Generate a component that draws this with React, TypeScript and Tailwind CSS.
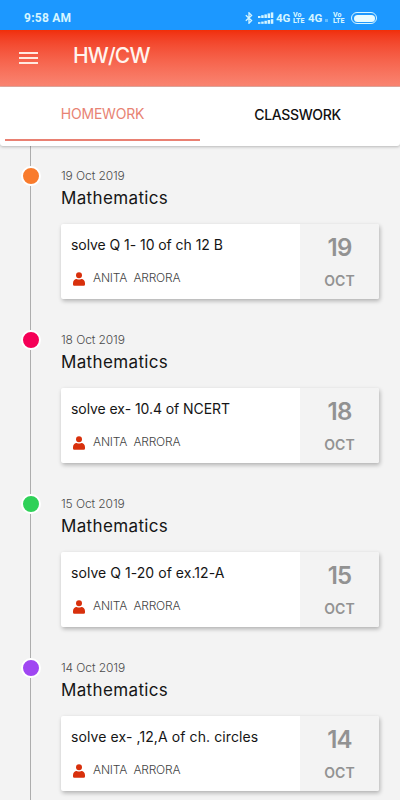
import React from "react";

type Entry = {
  day: string;
  task: string;
  taskClass: string;
  dot: string;
};

const entries: Entry[] = [
  { day: "19", task: "solve Q 1- 10 of ch 12 B", taskClass: "tracking-[-0.06px]", dot: "bg-[#f97b2c]" },
  { day: "18", task: "solve ex- 10.4 of NCERT", taskClass: "tracking-[-0.06px]", dot: "bg-[#f50057]" },
  { day: "15", task: "solve Q 1-20 of ex.12-A", taskClass: "tracking-[0.05px]", dot: "bg-[#2fd158]" },
  { day: "14", task: "solve ex- ,12,A of ch. circles", taskClass: "tracking-[0.1px]", dot: "bg-[#a046f2]" },
];

function Bluetooth() {
  return (
    <svg width="8" height="12" viewBox="0 0 8 12" fill="none" stroke="#d5f5ff" strokeWidth="1.3">
      <path d="M0.8 3.2 L6.6 8.6 L4 11.2 V0.8 L6.6 3.4 L0.8 8.8" />
    </svg>
  );
}

function DualSignal() {
  return (
    <svg width="16" height="13" viewBox="0 0 16 13" fill="#d5f5ff">
      <rect x="0" y="4" width="2.5" height="2" />
      <rect x="3.2" y="3.2" width="2.5" height="2.8" />
      <rect x="6.4" y="2.4" width="2.5" height="3.6" />
      <rect x="9.6" y="1.4" width="2.5" height="4.6" />
      <rect x="12.8" y="0.4" width="2.5" height="5.6" />
      <rect x="0" y="10.2" width="2.5" height="1.6" />
      <rect x="3.2" y="9.6" width="2.5" height="2.2" />
      <rect x="6.4" y="8.8" width="2.5" height="3" />
      <rect x="9.6" y="8" width="2.5" height="3.8" />
      <rect x="12.8" y="7.2" width="2.5" height="4.6" />
    </svg>
  );
}

function VoLte() {
  return (
    <span className="flex w-[13px] flex-col text-[7px] font-extrabold leading-[6.5px]">
      <span>Vo</span>
      <span>LTE</span>
    </span>
  );
}

function StatusBar() {
  return (
    <div className="flex h-[30px] shrink-0 items-center bg-[#1c98ff] pl-6 pr-[23px] pt-[6px] font-['Roboto',sans-serif] text-[#d5f5ff]">
      <span className="text-[12px] font-bold leading-3 tracking-[0.25px]">9:58 AM</span>
      <div className="ml-auto flex items-center">
        <Bluetooth />
        <span className="ml-[5px]"><DualSignal /></span>
        <span className="ml-[2px] w-[17px] text-[11.5px] font-bold leading-3">4G</span>
        <VoLte />
        <span className="ml-[2px] w-[17px] text-[11.5px] font-bold leading-3">4G</span>
        <span className="mr-[5px] mt-[5px] h-[3px] w-[3px] bg-[#62bcff]" />
        <VoLte />
        <span className="ml-[5px] flex h-[12px] w-[26px] rounded-full border border-[#d5f5ff] p-[1.5px]">
          <span className="flex-1 rounded-full bg-[#e8fbff]" />
        </span>
      </div>
    </div>
  );
}

function Person() {
  return (
    <svg className="mt-[2px]" width="12" height="14" viewBox="0 0 12 14" fill="#d8300c">
      <circle cx="6" cy="3.2" r="3" />
      <path d="M0 11.3 C0 8.4 1.5 7.2 3.8 7 Q6 8.1 8.2 7 C10.5 7.2 12 8.4 12 11.3 V12.4 Q12 13.7 10.7 13.7 H1.3 Q0 13.7 0 12.4 Z" />
    </svg>
  );
}

function TimelineItem({ day, task, taskClass, dot }: Entry) {
  return (
    <section className="flex h-[164px] shrink-0">
      <div className="flex w-[61px] shrink-0 flex-col items-center">
        <span className="h-[20px] w-px bg-[#adadad]" />
        <span className={`h-[20px] w-[20px] shrink-0 rounded-full border-[2.5px] border-white ${dot}`} />
        <span className="w-px flex-1 bg-[#adadad]" />
      </div>
      <div className="w-[319px] pt-[20px]">
        <p className="h-[18px] whitespace-nowrap text-[12px] font-light leading-[19px] tracking-[-0.1px] text-[#4c4c4c]">{day} Oct 2019</p>
        <h2 className="mt-[2px] h-[24px] whitespace-nowrap text-[17px] font-normal leading-[25px] tracking-[0.36px] text-[#151515]">Mathematics</h2>
        <article className="mt-[14px] flex h-[75px] w-[318px] rounded-[2px] bg-white shadow-[1px_2px_4px_rgba(0,0,0,0.28)]">
          <div className="w-[239px] pl-[10px] pt-[10px]">
            <p className={`whitespace-nowrap text-[14px] leading-[22px] text-[#151515] ${taskClass}`}>{task}</p>
            <div className="mt-[13px] flex h-[18px] items-center pl-[2px]">
              <Person />
              <span className="ml-[8px] whitespace-pre text-[12px] font-light leading-[18px] tracking-[-0.2px] text-[#444]">ANITA  ARRORA</span>
            </div>
          </div>
          <div className="flex flex-1 flex-col items-center rounded-r-[2px] bg-[#f3f3f3] text-[#929292]">
            <span className="mt-[9px] text-[24px] font-semibold leading-[30px] tracking-[-0.8px]">{day}</span>
            <span className="mt-[8px] text-[14px] font-semibold leading-[20px]">OCT</span>
          </div>
        </article>
      </div>
    </section>
  );
}

export default function App() {
  return (
    <div className="flex h-[800px] w-[400px] flex-col overflow-hidden bg-[#f3f3f3] font-['Inter',sans-serif]">
      <StatusBar />
      <header className="flex h-[57px] shrink-0 items-center border-b border-[#e5aaa0] bg-linear-to-b from-[#f02e08] to-[#f98471] pl-[19px]">
        <div className="-mt-px flex w-[19px] flex-col gap-[3px]">
          <span className="h-[2px] bg-[#ffe9df]" />
          <span className="h-[2px] bg-[#ffe9df]" />
          <span className="h-[2px] bg-[#ffe9df]" />
        </div>
        <h1 className="mb-[4px] ml-[35px] text-[21px] font-medium leading-7 tracking-[-0.8px] text-[#fff4ee]">HW/CW</h1>
      </header>
      <nav className="z-10 flex h-[59px] shrink-0 rounded-b-[3px] bg-white text-[14px] shadow-[0_1px_3px_rgba(0,0,0,0.25)]">
        <div className="mb-[5px] ml-[5px] flex w-[195px] items-center justify-center border-b-2 border-[#e98072] tracking-[-0.2px] text-[#e88373]">HOMEWORK</div>
        <div className="flex flex-1 items-center justify-center pb-[5px] pr-[5px] font-medium tracking-[-0.35px] text-[#111]">CLASSWORK</div>
      </nav>
      <main className="flex flex-col">
        {entries.map((entry) => (
          <TimelineItem key={entry.day} {...entry} />
        ))}
      </main>
    </div>
  );
}
